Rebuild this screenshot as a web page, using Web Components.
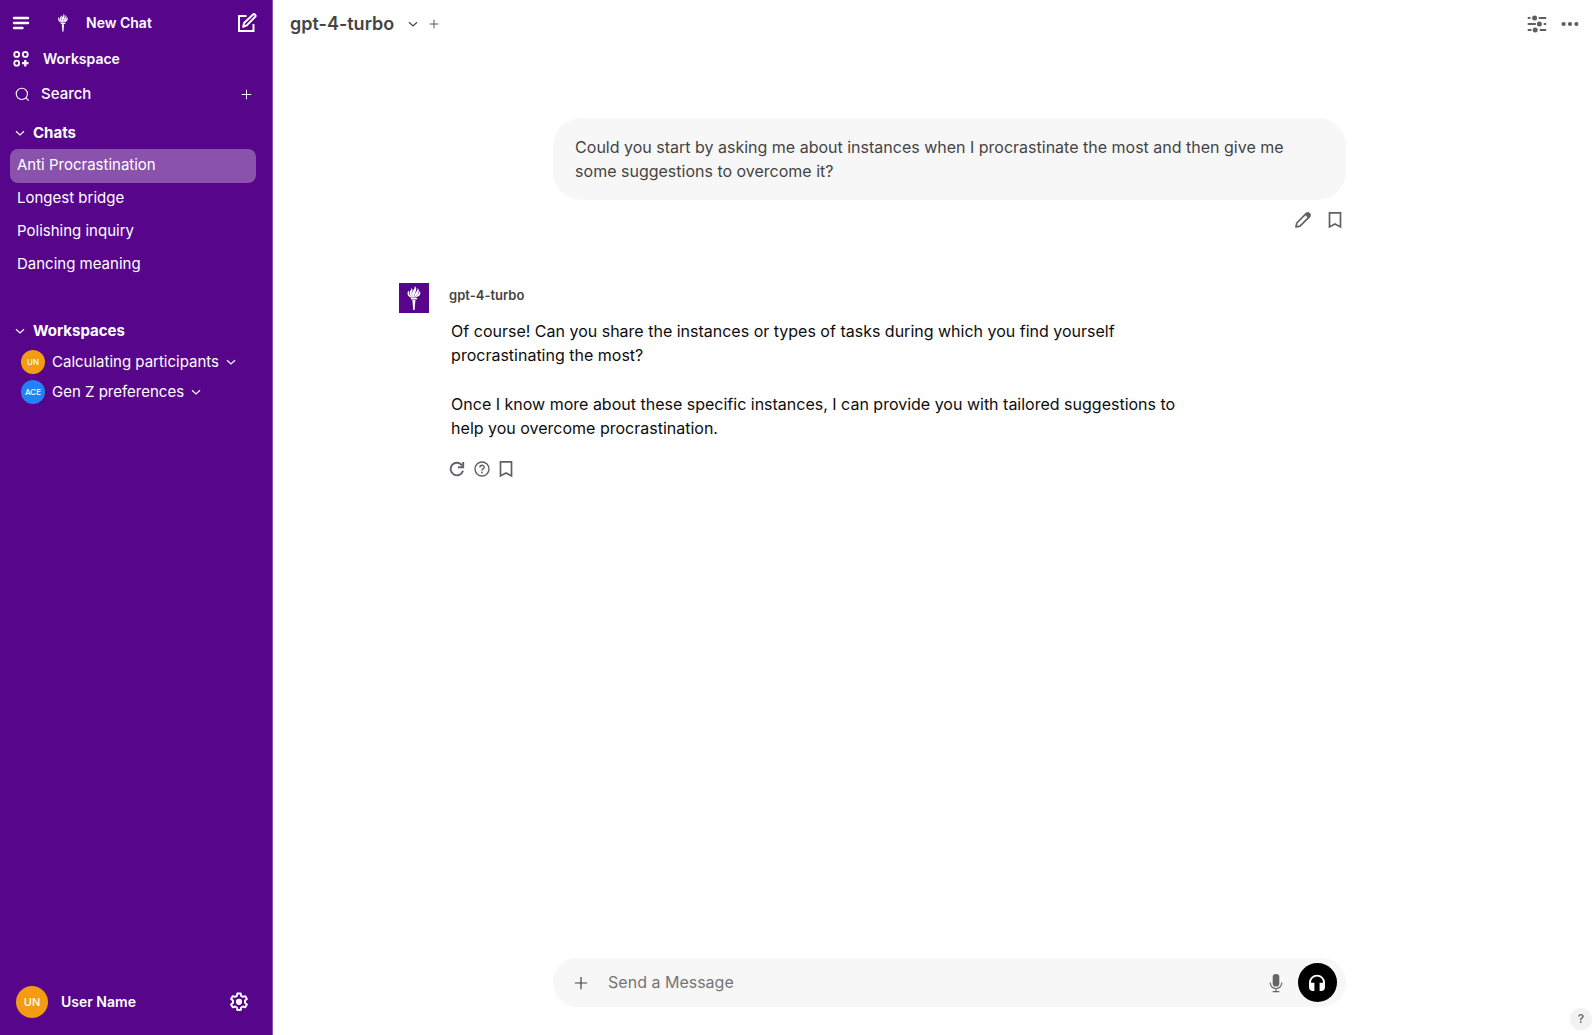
<!DOCTYPE html>
<html lang="en">
<head>
<meta charset="utf-8">
<meta name="viewport" content="width=device-width, initial-scale=1">
<title>Chat</title>
<style>
  html, body {
    height: 100%;
    margin: 0;
  }
  body {
    --violet: #57068c;
    --violet-light: #8a52ac;
    --grey: #f7f7f7;
    --text: #444;
    font: 16px/24px Inter, "Liberation Sans", sans-serif;
    color: #0d0d0d;
    background: #fff;
  }
</style>
</head>
<body>
<chat-app>
  <side-bar slot="sidebar">
    <nav-section slot="sections" label="Chats">
      <chat-link href="#anti-procrastination" active>Anti Procrastination</chat-link>
      <chat-link href="#longest-bridge">Longest bridge</chat-link>
      <chat-link href="#polishing-inquiry">Polishing inquiry</chat-link>
      <chat-link href="#dancing-meaning">Dancing meaning</chat-link>
    </nav-section>
    <nav-section slot="sections" label="Workspaces">
      <workspace-item initials="UN" color="#f39c12">Calculating participants</workspace-item>
      <workspace-item initials="ACE" color="#1f82f5">Gen Z preferences</workspace-item>
    </nav-section>
  </side-bar>

  <model-bar slot="header" model="gpt-4-turbo"></model-bar>

  <user-message>Could you start by asking me about instances when I procrastinate the most and then give me some suggestions to overcome it?</user-message>
  <bot-message name="gpt-4-turbo">
    <p>Of course! Can you share the instances or types of tasks during which you find yourself procrastinating the most?</p>
    <p>Once I know more about these specific instances, I can provide you with tailored suggestions to help you overcome procrastination.</p>
  </bot-message>

  <message-box slot="footer"></message-box>
</chat-app>

<script>
const icons = {
  menu: [18, 14, '<g stroke="currentColor" stroke-width="2.400" stroke-linecap="round"><path d="M2 2h14M2 7h14M2 12h8.500"/></g>'],
  compose: [20, 20, '<g fill="none" stroke="currentColor" stroke-width="2"><path d="M9.5 3H2v15h14.500v-7"/><path d="M6.200 13.800l.9-3.900 8.700-8.200a1.500 1.500 0 0 1 2.300 2.200l-8.300 8.500z" stroke-linejoin="round"/></g>'],
  grid: [16, 16, '<g fill="none" stroke="currentColor" stroke-width="1.600"><circle cx="4.200" cy="3.900" r="2.200"/><circle cx="11.800" cy="3.900" r="2.200"/><circle cx="4.200" cy="11.700" r="2.200"/><path d="M11.800 8.800v5.800M8.900 11.700h5.800" stroke-width="2"/></g>'],
  search: [16, 16, '<g fill="none" stroke="currentColor" stroke-width="1.200"><circle cx="7.300" cy="7.300" r="6"/><path d="M11.600 11.600l3 3"/></g>'],
  plus: [16, 16, '<path d="M8 1v14M1 8h14" fill="none" stroke="currentColor" stroke-width="1.400"/>'],
  chevron: [10, 10, '<path d="M1 3.300l4 3.700 4-3.700" fill="none" stroke="currentColor" stroke-width="1.200"/>'],
  torch: [16, 26, `<g fill="currentColor">
    <path d="M7.300 13C5 11.500 3 9.800 3.700 7.100c.4-1.400 1.700-2.200 1.800-4 1.700 1.700.8 3.100.2 4.400-.6 1.600 1 2.900 1.900 5.400z"/>
    <path d="M7.700 12.700C6 10 5.300 8.300 6.800 5.900 7.900 4.300 9 3.100 8.800 1c2 2.200 1.600 4.200.6 6-.9 1.700-1.300 3.400-1.300 5.700z"/>
    <path d="M8.300 12.700c-.1-2.800.6-4.300 1.800-5.700 1-1.200 1.700-2.400 1.500-4.300 1.800 2.400 1.400 4.300.2 6-1.100 1.500-2.500 2.300-3.100 4z"/>
    <path d="M8.800 13c.8-2 2.200-3 3.300-4.200.9-1 1.500-2 1.400-3.400 1.500 2.300.8 4.500-.7 5.700-1.200.9-2.700 1-3.700 1.900z"/>
    <path d="M6.800 13C3.700 12.300 1.500 11 1.500 8.400c0-1.200.6-1.900.7-3 1.200 1.200.7 2.300.9 3.400.4 1.800 2.300 2.500 3.700 4.200z"/>
    <path d="M4.600 12.900h6.800l-.7 1.700H5.300zM6.400 15h3l-.8 10H7.200z"/>
  </g>`],
  gear: [20, 20, '<path d="M8.300 1.500h3.400l.4 2.400 1.800 1 2.300-.8 1.700 2.900-1.900 1.600v2.200l1.900 1.600-1.700 2.900-2.300-.8-1.800 1-.4 2.500H8.300l-.4-2.500-1.800-1-2.300.8-1.700-2.900L4 10.800V8.600L2.100 7l1.700-2.900 2.300.8 1.800-1z" fill="none" stroke="currentColor" stroke-width="1.900" stroke-linejoin="round"/><circle cx="10" cy="9.800" r="3.100" fill="currentColor"/>'],
  sliders: [20, 18, '<g fill="none" stroke="currentColor" stroke-width="1.900" stroke-linecap="round"><path d="M1.500 3h1.200M12.500 3h6M1.500 9h6.600M17.500 9h1M1.500 15h2.200M13.500 15h5"/></g><g fill="currentColor"><circle cx="7.600" cy="3" r="2.500"/><circle cx="12.400" cy="9" r="2.500"/><circle cx="8.200" cy="15" r="2.500"/></g>'],
  dots: [18, 6, '<g fill="currentColor"><circle cx="2.600" cy="3" r="2.100"/><circle cx="9" cy="3" r="2.100"/><circle cx="15.400" cy="3" r="2.100"/></g>'],
  pencil: [18, 18, '<path d="M2 16l.8-4L12.600 2.200l3.200 3.200L6 15.200z" fill="none" stroke="currentColor" stroke-width="1.700" stroke-linejoin="round"/><path d="M11 3.800l2-2.300q1.200-.9 2.400.2l.9.900q1.100 1.200.2 2.400l-2.300 2z" fill="currentColor"/>'],
  bookmark: [14, 18, '<path d="M1.500 1.900h11v14L7 12.900l-5.500 3z" fill="none" stroke="currentColor" stroke-width="1.700"/>'],
  refresh: [16, 16, '<g fill="none" stroke="currentColor" stroke-width="1.900"><path d="M13.200 4.500A6.300 6.300 0 1 0 14 9.800"/><path d="M14.200 1v5.300H9"/></g>'],
  question: [16, 16, '<g fill="none" stroke="currentColor" stroke-width="1.400"><circle cx="8" cy="8" r="7"/><path d="M5.900 6.400c.1-2.900 4.300-2.800 4.300-.2 0 1.700-2.200 1.700-2.200 3.400"/></g><circle cx="8" cy="11.500" r=".9" fill="currentColor"/>'],
  mic: [14, 20, '<rect x="3.700" y="1" width="6.600" height="12.500" rx="3.100" fill="currentColor"/><path d="M1.300 9.500v.8a5.700 5.200 0 0 0 11.400 0v-.8M7 15.600v2.900M3.700 18.700h6.600" fill="none" stroke="currentColor" stroke-width="1.200"/>'],
  headphones: [18, 18, '<path d="M2 11V8.500a7 6.900 0 0 1 14 0V11" fill="none" stroke="currentColor" stroke-width="1.900"/><path d="M1 8.700h5.400v8.200H4.300Q1 16.400 1 13zM17 8.700h-5.400v8.200h2.100q3.300-.5 3.300-3.900z" fill="currentColor"/>']
};

// Shared reset for the buttons of every component
const buttonStyle = `
  button {
    all: unset;
    box-sizing: border-box;
    display: flex;
    align-items: center;
    cursor: pointer;
  }
  button:focus-visible {
    outline: 2px solid currentColor;
    outline-offset: 2px;
  }
`;

// <ui-icon name="plus" size="12">
class UiIcon extends HTMLElement {
  constructor() {
    super();
    this.attachShadow({mode: 'open'});
  }

  connectedCallback() {
    const [width, height, shape] = icons[this.getAttribute('name')];
    const size = parseInt(this.getAttribute('size')) || width;

    this.shadowRoot.innerHTML = `
      <style>
        :host { display: block; flex: none; }
        svg { display: block; }
      </style>
      <svg width="${size}" height="${size * height / width}" viewBox="0 0 ${width} ${height}" aria-hidden="true">${shape}</svg>
    `;
  }
}

// <user-avatar initials="UN" color="orange" size="24">
class UserAvatar extends HTMLElement {
  constructor() {
    super();
    this.attachShadow({mode: 'open'});
  }

  connectedCallback() {
    const size = parseInt(this.getAttribute('size')) || 24;

    this.shadowRoot.innerHTML = `
      <style>
        :host {
          display: flex;
          flex: none;
          align-items: center;
          justify-content: center;
          width: ${size}px;
          height: ${size}px;
          border-radius: 50%;
          background: ${this.getAttribute('color')};
          color: #fff;
          font-size: ${size > 24 ? 11 : 8}px;
          font-weight: 500;
        }
      </style>
      <span>${this.getAttribute('initials')}</span>
    `;
  }
}

// <chat-app>
class ChatApp extends HTMLElement {
  constructor() {
    super();
    this.attachShadow({mode: 'open'});
  }

  connectedCallback() {
    this.shadowRoot.innerHTML = `
      <style>
        ${buttonStyle}
        :host {
          display: grid;
          grid-template-columns: 273px 1fr;
          height: 100%;
        }
        .page {
          display: flex;
          flex-direction: column;
          min-width: 0;
        }
        main, footer {
          display: grid;
          grid-template-columns: 126fr 946fr 250fr;
        }
        main {
          flex: 1;
          align-content: start;
          padding-top: 70px;
          overflow: auto;
        }
        ::slotted(user-message),
        ::slotted(bot-message),
        ::slotted(message-box) {
          grid-column: 2;
        }
        footer {
          padding-bottom: 28px;
        }
        .help {
          position: fixed;
          right: 4px;
          bottom: 5px;
          justify-content: center;
          width: 22px;
          height: 22px;
          border-radius: 50%;
          background: #f2f2f2;
          color: #666;
          font-size: 12px;
          font-weight: 600;
        }
      </style>
      <slot name="sidebar"></slot>
      <div class="page">
        <slot name="header"></slot>
        <main><slot></slot></main>
        <footer><slot name="footer"></slot></footer>
      </div>
      <button class="help" aria-label="Help">?</button>
    `;
  }
}

// <side-bar>
class SideBar extends HTMLElement {
  constructor() {
    super();
    this.attachShadow({mode: 'open'});
  }

  connectedCallback() {
    this.shadowRoot.innerHTML = `
      <style>
        ${buttonStyle}
        :host {
          display: flex;
          flex-direction: column;
          box-sizing: border-box;
          border-right: 1px solid var(--violet-light);
          background: var(--violet);
          color: #fff;
          font-size: 15px;
        }
        .row {
          display: flex;
          align-items: center;
          padding: 0 15px 0 12px;
          font-size: 14px;
          font-weight: 600;
        }
        .top {
          height: 46px;
        }
        .new {
          flex: 1;
          gap: 17px;
          margin-left: 27px;
        }
        .workspace {
          gap: 13px;
          height: 26px;
        }
        .search {
          height: 44px;
          padding: 0 20px 0 15px;
          font-size: 15px;
          font-weight: 500;
        }
        input {
          all: unset;
          flex: 1;
          min-width: 0;
          margin-left: 11px;
        }
        input::placeholder {
          color: #fff;
          opacity: 1;
        }
        .sections {
          display: flex;
          flex: 1;
          flex-direction: column;
          gap: 33px;
        }
        .user {
          height: 66px;
          padding: 0 23px 0 16px;
        }
        .user span {
          flex: 1;
          margin-left: 13px;
        }
      </style>
      <div class="row top">
        <button aria-label="Toggle sidebar"><ui-icon name="menu"></ui-icon></button>
        <button class="new"><ui-icon name="torch" size="12"></ui-icon>New Chat</button>
        <button aria-label="Compose"><ui-icon name="compose"></ui-icon></button>
      </div>
      <button class="row workspace"><ui-icon name="grid" size="18"></ui-icon>Workspace</button>
      <div class="row search">
        <ui-icon name="search" size="15"></ui-icon>
        <input type="search" placeholder="Search" aria-label="Search">
        <button aria-label="Add chat"><ui-icon name="plus" size="11"></ui-icon></button>
      </div>
      <nav class="sections"><slot name="sections"></slot></nav>
      <div class="row user">
        <user-avatar initials="UN" color="#f39c12" size="32"></user-avatar>
        <span>User Name</span>
        <button aria-label="Settings"><ui-icon name="gear"></ui-icon></button>
      </div>
    `;
  }
}

// <nav-section label="Chats">
class NavSection extends HTMLElement {
  constructor() {
    super();
    this.attachShadow({mode: 'open'});
    this.toggle = this.toggle.bind(this);
  }

  connectedCallback() {
    this.shadowRoot.innerHTML = `
      <style>
        ${buttonStyle}
        :host { display: block; }
        button {
          gap: 8px;
          height: 33px;
          padding: 0 15px;
          font-weight: 700;
        }
        .items[hidden] { display: none; }
      </style>
      <button aria-expanded="true"><ui-icon name="chevron"></ui-icon>${this.getAttribute('label')}</button>
      <div class="items"><slot></slot></div>
    `;

    this.button = this.shadowRoot.querySelector('button');
    this.items = this.shadowRoot.querySelector('.items');
    this.button.addEventListener('click', this.toggle);
  }

  toggle() {
    this.items.hidden = !this.items.hidden;
    this.button.setAttribute('aria-expanded', !this.items.hidden);
  }
}

// <chat-link href="#" active>
class ChatLink extends HTMLElement {
  constructor() {
    super();
    this.attachShadow({mode: 'open'});
  }

  connectedCallback() {
    this.shadowRoot.innerHTML = `
      <style>
        :host {
          display: block;
          margin-bottom: -1px;
          padding: 0 16px 0 10px;
        }
        a {
          display: block;
          padding: 4px 7px 6px;
          border-radius: 8px;
          color: #fff;
          text-decoration: none;
        }
        :host([active]) a { background: var(--violet-light); }
      </style>
      <a href="${this.getAttribute('href')}"><slot></slot></a>
    `;
  }
}

// <workspace-item initials="UN" color="orange">
class WorkspaceItem extends HTMLElement {
  constructor() {
    super();
    this.attachShadow({mode: 'open'});
  }

  connectedCallback() {
    this.shadowRoot.innerHTML = `
      <style>
        ${buttonStyle}
        :host { display: block; }
        button {
          gap: 7px;
          height: 30px;
          padding-left: 21px;
        }
      </style>
      <button aria-expanded="false">
        <user-avatar initials="${this.getAttribute('initials')}" color="${this.getAttribute('color')}"></user-avatar>
        <slot></slot>
        <ui-icon name="chevron"></ui-icon>
      </button>
    `;
  }
}

// <model-bar model="gpt-4-turbo">
class ModelBar extends HTMLElement {
  constructor() {
    super();
    this.attachShadow({mode: 'open'});
  }

  connectedCallback() {
    const model = this.getAttribute('model');

    this.shadowRoot.innerHTML = `
      <style>
        ${buttonStyle}
        :host {
          display: flex;
          align-items: center;
          gap: 11px;
          height: 48px;
          padding: 0 17px;
          color: var(--text);
        }
        .model {
          display: grid;
          align-items: center;
        }
        .model > * { grid-area: 1 / 1; }
        .model ui-icon {
          justify-self: end;
          pointer-events: none;
        }
        select {
          appearance: none;
          margin: 0;
          padding: 0 23px 0 0;
          border: 0;
          background: none;
          color: inherit;
          font: 600 18px/24px Inter, "Liberation Sans", sans-serif;
        }
        .actions {
          display: flex;
          align-items: center;
          gap: 14px;
          margin-left: auto;
          color: #5f5f63;
        }
      </style>
      <div class="model">
        <select aria-label="Model"><option>${model}</option></select>
        <ui-icon name="chevron"></ui-icon>
      </div>
      <button aria-label="Add model"><ui-icon name="plus" size="10"></ui-icon></button>
      <div class="actions">
        <button aria-label="Controls"><ui-icon name="sliders"></ui-icon></button>
        <button aria-label="More"><ui-icon name="dots"></ui-icon></button>
      </div>
    `;
  }
}

// <user-message>
class UserMessage extends HTMLElement {
  constructor() {
    super();
    this.attachShadow({mode: 'open'});
  }

  connectedCallback() {
    this.shadowRoot.innerHTML = `
      <style>
        ${buttonStyle}
        :host {
          display: block;
          margin-left: 154px;
          color: var(--text);
        }
        .bubble {
          padding: 17px 22px;
          border-radius: 28px;
          background: var(--grey);
        }
        .actions {
          display: flex;
          justify-content: flex-end;
          gap: 16px;
          padding: 11px 4px 0;
          color: #5f6068;
        }
      </style>
      <div class="bubble"><slot></slot></div>
      <div class="actions">
        <button aria-label="Edit"><ui-icon name="pencil"></ui-icon></button>
        <button aria-label="Bookmark"><ui-icon name="bookmark"></ui-icon></button>
      </div>
    `;
  }
}

// <bot-message name="gpt-4-turbo">
class BotMessage extends HTMLElement {
  constructor() {
    super();
    this.attachShadow({mode: 'open'});
  }

  connectedCallback() {
    this.shadowRoot.innerHTML = `
      <style>
        ${buttonStyle}
        :host {
          display: grid;
          grid-template-columns: 30px 1fr;
          gap: 20px;
          margin-top: 54px;
        }
        .logo {
          display: grid;
          place-items: center;
          width: 30px;
          height: 30px;
          background: var(--violet);
          color: #fff;
        }
        .name {
          color: var(--text);
          font-size: 13px;
          font-weight: 600;
        }
        .text {
          display: flex;
          flex-direction: column;
          gap: 25px;
          max-width: 740px;
          padding: 12px 2px 20px;
        }
        ::slotted(p) { margin: 0; }
        .actions {
          display: flex;
          align-items: center;
          gap: 9px;
          color: #5f6068;
        }
      </style>
      <div class="logo"><ui-icon name="torch"></ui-icon></div>
      <div>
        <div class="name">${this.getAttribute('name')}</div>
        <div class="text"><slot></slot></div>
        <div class="actions">
          <button aria-label="Regenerate"><ui-icon name="refresh"></ui-icon></button>
          <button aria-label="Explain"><ui-icon name="question"></ui-icon></button>
          <button aria-label="Bookmark"><ui-icon name="bookmark"></ui-icon></button>
        </div>
      </div>
    `;
  }
}

// <message-box>
class MessageBox extends HTMLElement {
  constructor() {
    super();
    this.attachShadow({mode: 'open'});
  }

  connectedCallback() {
    this.shadowRoot.innerHTML = `
      <style>
        ${buttonStyle}
        :host {
          display: flex;
          align-items: center;
          margin-left: 154px;
          padding: 5px 9px 5px 21px;
          border-radius: 25px;
          background: var(--grey);
          color: var(--text);
        }
        input {
          flex: 1;
          min-width: 0;
          margin: 0 20px;
          padding: 0 0 2px;
          border: 0;
          outline: 0;
          background: none;
          color: inherit;
          font: inherit;
        }
        input::placeholder {
          color: #757575;
          opacity: 1;
        }
        .mic { color: #666; }
        .call {
          justify-content: center;
          width: 39px;
          height: 39px;
          margin-left: 15px;
          border-radius: 50%;
          background: #000;
          color: #fff;
        }
      </style>
      <button aria-label="Attach"><ui-icon name="plus" size="14"></ui-icon></button>
      <input type="text" placeholder="Send a Message" aria-label="Send a Message">
      <button class="mic" aria-label="Dictate"><ui-icon name="mic"></ui-icon></button>
      <button class="call" aria-label="Call"><ui-icon name="headphones"></ui-icon></button>
    `;
  }
}

customElements.define('ui-icon', UiIcon);
customElements.define('user-avatar', UserAvatar);
customElements.define('chat-app', ChatApp);
customElements.define('side-bar', SideBar);
customElements.define('nav-section', NavSection);
customElements.define('chat-link', ChatLink);
customElements.define('workspace-item', WorkspaceItem);
customElements.define('model-bar', ModelBar);
customElements.define('user-message', UserMessage);
customElements.define('bot-message', BotMessage);
customElements.define('message-box', MessageBox);
</script>
</body>
</html>
